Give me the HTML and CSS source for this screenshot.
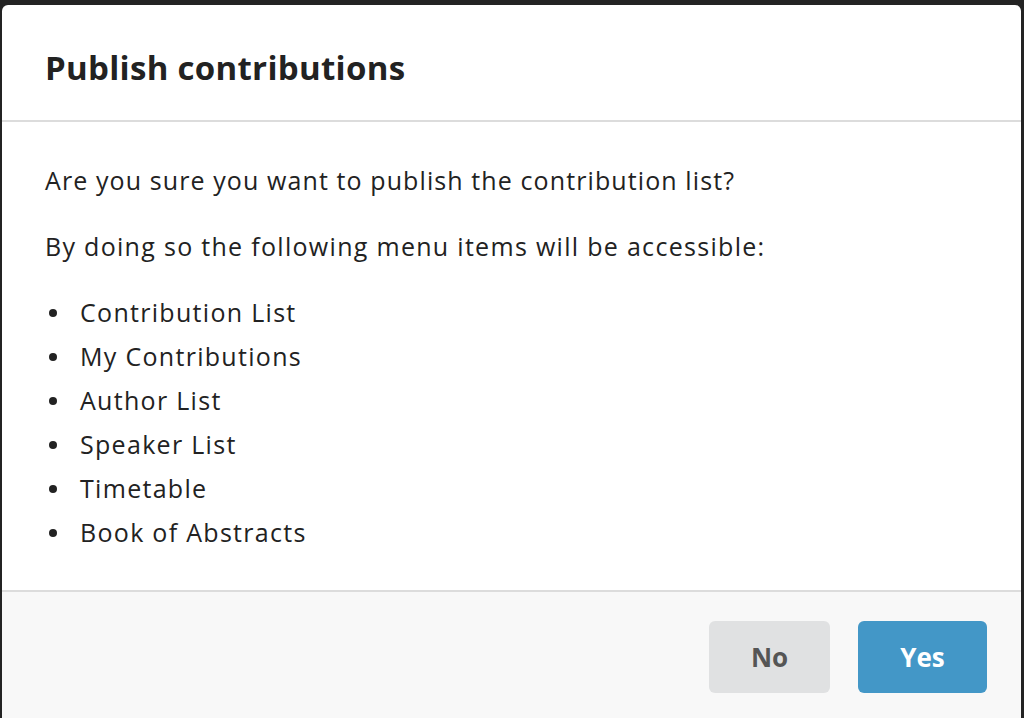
FILE: index.html
```html
<!DOCTYPE html>
<html>
<head>
<meta charset="utf-8">
<link rel="stylesheet" href="styles.css">
</head>
<body>
<div class="modal">
  <div class="modal-header">Publish contributions</div>
  <div class="modal-content">
    <p>Are you sure you want to publish the contribution list?</p>
    <p class="wide">By doing so the following menu items will be accessible:</p>
    <ul class="items">
      <li>Contribution List</li>
      <li>My Contributions</li>
      <li>Author List</li>
      <li>Speaker List</li>
      <li>Timetable</li>
      <li>Book of Abstracts</li>
    </ul>
  </div>
  <div class="modal-actions">
    <button class="btn btn-no">No</button>
    <button class="btn btn-yes">Yes</button>
  </div>
</div>
</body>
</html>
```
FILE: styles.css
```css
html, body {
  margin: 0;
  padding: 0;
  height: 100%;
  overflow: hidden;
}
body {
  background: #232323;
  font-family: "Open Sans", "Lato", sans-serif;
  color: #222;
}
.modal {
  margin: 5px 3px 0 2px;
  background: #fff;
  border-radius: 6px 6px 0 0;
  height: 760px;
  display: flex;
  flex-direction: column;
}
.modal-header {
  font-size: 33px;
  font-weight: 700;
  letter-spacing: 0.3px;
  line-height: 40px;
  padding: 43px 43px 32px;
  border-bottom: 2px solid #dcdcdc;
}
.modal-content {
  padding: 36px 43px 36px;
  font-size: 25px;
  letter-spacing: 1.1px;
  line-height: 44px;
}
.modal-content p {
  margin: 0 0 22px;
}
.modal-content p.wide {
  letter-spacing: 1.3px;
}
.items {
  margin: 0;
  padding: 0;
  list-style: none;
  letter-spacing: 1.3px;
}
.items li {
  display: flex;
  align-items: center;
}
.items li::before {
  content: "";
  width: 8px;
  height: 8px;
  border-radius: 50%;
  background: #222;
  margin: 2px 23px 0 4px;
  flex: none;
}
.modal-actions {
  flex: 1;
  background: #f8f8f8;
  border-top: 2px solid #dcdcdc;
  display: flex;
  justify-content: flex-end;
  align-items: flex-start;
  gap: 28px;
  padding: 29px 34px 0 0;
}
.btn {
  border: none;
  border-radius: 6px;
  height: 72px;
  font-family: inherit;
  font-size: 26px;
  font-weight: 700;
}
.btn-no {
  width: 121px;
  background: #e0e1e2;
  color: #555;
}
.btn-yes {
  width: 129px;
  background: #4397c7;
  color: #fff;
}
```
